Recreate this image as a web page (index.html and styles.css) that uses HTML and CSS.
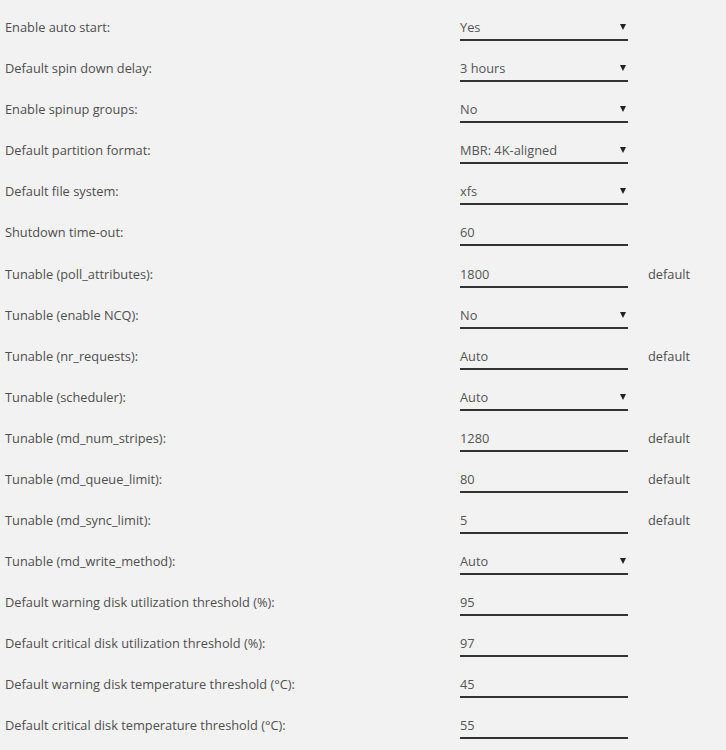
FILE: index.html
```html
<!DOCTYPE html>
<html lang="en">
<head>
<meta charset="utf-8">
<title>Disk Settings</title>
<link rel="stylesheet" href="styles.css">
</head>
<body>
<form class="settings">
  <div class="row"><span class="label">Enable auto start:</span><span class="field select">Yes</span></div>
  <div class="row"><span class="label">Default spin down delay:</span><span class="field select">3 hours</span></div>
  <div class="row"><span class="label">Enable spinup groups:</span><span class="field select">No</span></div>
  <div class="row"><span class="label">Default partition format:</span><span class="field select">MBR: 4K-aligned</span></div>
  <div class="row"><span class="label">Default file system:</span><span class="field select">xfs</span></div>
  <div class="row"><span class="label">Shutdown time-out:</span><span class="field">60</span></div>
  <div class="row"><span class="label">Tunable (poll_attributes):</span><span class="field">1800</span><span class="note">default</span></div>
  <div class="row"><span class="label">Tunable (enable NCQ):</span><span class="field select">No</span></div>
  <div class="row"><span class="label">Tunable (nr_requests):</span><span class="field">Auto</span><span class="note">default</span></div>
  <div class="row"><span class="label">Tunable (scheduler):</span><span class="field select">Auto</span></div>
  <div class="row"><span class="label">Tunable (md_num_stripes):</span><span class="field">1280</span><span class="note">default</span></div>
  <div class="row"><span class="label">Tunable (md_queue_limit):</span><span class="field">80</span><span class="note">default</span></div>
  <div class="row"><span class="label">Tunable (md_sync_limit):</span><span class="field">5</span><span class="note">default</span></div>
  <div class="row"><span class="label">Tunable (md_write_method):</span><span class="field select">Auto</span></div>
  <div class="row"><span class="label">Default warning disk utilization threshold (%):</span><span class="field">95</span></div>
  <div class="row"><span class="label">Default critical disk utilization threshold (%):</span><span class="field">97</span></div>
  <div class="row"><span class="label">Default warning disk temperature threshold (°C):</span><span class="field">45</span></div>
  <div class="row"><span class="label">Default critical disk temperature threshold (°C):</span><span class="field">55</span></div>
</form>
</body>
</html>
```
FILE: styles.css
```css
html, body {
  margin: 0;
  padding: 0;
  background: #f2f2f2;
}

body {
  font-family: "Open Sans", "Noto Sans", sans-serif;
  font-size: 12.8px;
  color: #4f4f4f;
}

.settings {
  display: flex;
  flex-direction: column;
  padding-left: 5px;
}

.row {
  display: grid;
  grid-template-columns: 435px 168px auto;
  column-gap: 20px;
  height: 41.08px;
  align-items: end;
}

.label,
.note {
  line-height: 18px;
  padding-bottom: 5px;
}

.field {
  position: relative;
  line-height: 18px;
  padding-top: 18px;
  padding-bottom: 3px;
  border-bottom: 2px solid #333;
  color: #555;
}

/* small caret on the right of dropdown fields */
.select::after {
  content: "";
  position: absolute;
  right: 2px;
  top: 24px;
  border-left: 3px solid transparent;
  border-right: 3px solid transparent;
  border-top: 6px solid #222;
}
```
